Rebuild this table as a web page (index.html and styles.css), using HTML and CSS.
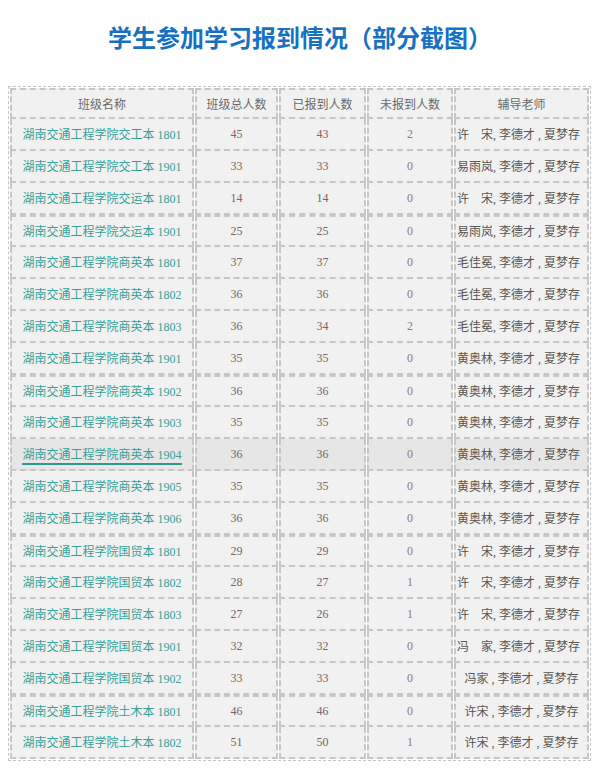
FILE: index.html
```html
<!DOCTYPE html>
<html>
	<head>
		<meta charset="utf-8" />
		<title>学生参加学习报到情况</title>
		<link rel="stylesheet" href="styles.css">
	</head>
	<body>
		<h1 class="page-title">学生参加学习报到情况（部分截图）</h1>
		<table class="report">
			<colgroup>
				<col class="c-name">
				<col class="c-total">
				<col class="c-done">
				<col class="c-left">
				<col class="c-teacher">
			</colgroup>
			<thead>
				<tr>
					<th>班级名称</th>
					<th>班级总人数</th>
					<th>已报到人数</th>
					<th>未报到人数</th>
					<th>辅导老师</th>
				</tr>
			</thead>
			<tbody>
				<tr><td class="cls"><a>湖南交通工程学院交工本 1801</a></td><td>45</td><td>43</td><td class="left">2</td><td class="teacher">许　宋, 李德才 , 夏梦存</td></tr>
				<tr><td class="cls"><a>湖南交通工程学院交工本 1901</a></td><td>33</td><td>33</td><td class="left">0</td><td class="teacher">易雨岚, 李德才 , 夏梦存</td></tr>
				<tr><td class="cls"><a>湖南交通工程学院交运本 1801</a></td><td>14</td><td>14</td><td class="left">0</td><td class="teacher">许　宋, 李德才 , 夏梦存</td></tr>
			</tbody>
			<tbody>
				<tr class="first"><td class="cls"><a>湖南交通工程学院交运本 1901</a></td><td>25</td><td>25</td><td class="left">0</td><td class="teacher">易雨岚, 李德才 , 夏梦存</td></tr>
				<tr><td class="cls"><a>湖南交通工程学院商英本 1801</a></td><td>37</td><td>37</td><td class="left">0</td><td class="teacher">毛佳冕, 李德才 , 夏梦存</td></tr>
				<tr><td class="cls"><a>湖南交通工程学院商英本 1802</a></td><td>36</td><td>36</td><td class="left">0</td><td class="teacher">毛佳冕, 李德才 , 夏梦存</td></tr>
				<tr><td class="cls"><a>湖南交通工程学院商英本 1803</a></td><td>36</td><td>34</td><td class="left">2</td><td class="teacher">毛佳冕, 李德才 , 夏梦存</td></tr>
				<tr><td class="cls"><a>湖南交通工程学院商英本 1901</a></td><td>35</td><td>35</td><td class="left">0</td><td class="teacher">黄奥林, 李德才 , 夏梦存</td></tr>
			</tbody>
			<tbody>
				<tr class="first"><td class="cls"><a>湖南交通工程学院商英本 1902</a></td><td>36</td><td>36</td><td class="left">0</td><td class="teacher">黄奥林, 李德才 , 夏梦存</td></tr>
				<tr><td class="cls"><a>湖南交通工程学院商英本 1903</a></td><td>35</td><td>35</td><td class="left">0</td><td class="teacher">黄奥林, 李德才 , 夏梦存</td></tr>
				<tr class="hover"><td class="cls"><a>湖南交通工程学院商英本 1904</a></td><td>36</td><td>36</td><td class="left">0</td><td class="teacher">黄奥林, 李德才 , 夏梦存</td></tr>
				<tr><td class="cls"><a>湖南交通工程学院商英本 1905</a></td><td>35</td><td>35</td><td class="left">0</td><td class="teacher">黄奥林, 李德才 , 夏梦存</td></tr>
				<tr><td class="cls"><a>湖南交通工程学院商英本 1906</a></td><td>36</td><td>36</td><td class="left">0</td><td class="teacher">黄奥林, 李德才 , 夏梦存</td></tr>
			</tbody>
			<tbody>
				<tr class="first"><td class="cls"><a>湖南交通工程学院国贸本 1801</a></td><td>29</td><td>29</td><td class="left">0</td><td class="teacher">许　宋, 李德才 , 夏梦存</td></tr>
				<tr><td class="cls"><a>湖南交通工程学院国贸本 1802</a></td><td>28</td><td>27</td><td class="left">1</td><td class="teacher">许　宋, 李德才 , 夏梦存</td></tr>
				<tr><td class="cls"><a>湖南交通工程学院国贸本 1803</a></td><td>27</td><td>26</td><td class="left">1</td><td class="teacher">许　宋, 李德才 , 夏梦存</td></tr>
				<tr><td class="cls"><a>湖南交通工程学院国贸本 1901</a></td><td>32</td><td>32</td><td class="left">0</td><td class="teacher">冯　家, 李德才 , 夏梦存</td></tr>
				<tr><td class="cls"><a>湖南交通工程学院国贸本 1902</a></td><td>33</td><td>33</td><td class="left">0</td><td class="teacher center">冯家 , 李德才 , 夏梦存</td></tr>
			</tbody>
			<tbody>
				<tr class="first"><td class="cls"><a>湖南交通工程学院土木本 1801</a></td><td>46</td><td>46</td><td class="left">0</td><td class="teacher center">许宋 , 李德才 , 夏梦存</td></tr>
				<tr><td class="cls"><a>湖南交通工程学院土木本 1802</a></td><td>51</td><td>50</td><td class="left">1</td><td class="teacher center">许宋 , 李德才 , 夏梦存</td></tr>
			</tbody>
		</table>
	</body>
</html>
```

FILE: styles.css
```css
:root {
	--line: #c6c6c6;
	--cell-bg: #f1f1f1;
	--serif: "Liberation Serif", "Noto Sans CJK SC", serif;
}

body {
	margin: 8px;
	background-color: #fff;
	font-family: var(--serif);
}

.page-title {
	margin: 14px 0 34px;
	font-family: "Noto Sans CJK SC", sans-serif;
	font-size: 24px;
	line-height: 30px;
	font-weight: bold;
	color: #1671c3;
	text-align: center;
}

.report {
	width: 583px;
	border: 1px dashed var(--line);
	border-collapse: separate;
	border-spacing: 1px 0;
	padding: 1px 0;
	table-layout: fixed;
	font-size: 12px;
}

.c-name { width: 184px; }
.c-total { width: 83px; }
.c-done { width: 87px; }
.c-left { width: 86px; }

.report th,
.report td {
	height: 30px;
	padding: 0 1px;
	background-color: var(--cell-bg);
	border-left: 2px dashed var(--line);
	border-right: 2px dashed var(--line);
	border-bottom: 2px dashed var(--line);
	text-align: center;
	color: #7a6464;
	font-weight: normal;
	white-space: nowrap;
}

.report th {
	height: 27px;
	border-top: 2px dashed var(--line);
	color: #6a6a6a;
}

.report tr.first td {
	border-top: 2px dashed var(--line);
	height: 28px;
}

.report .cls a {
	color: #37a096;
	text-decoration: none;
	padding-bottom: 1px;
}

.report .left {
	color: #8f7a76;
}

.report .teacher {
	text-align: left;
	color: #5a5454;
}

.report .teacher.center {
	text-align: center;
}

.report tr.hover td {
	background-color: #e6e6e6;
}

.report tr.hover .cls a {
	border-bottom: 2px solid #2f978c;
}
```
